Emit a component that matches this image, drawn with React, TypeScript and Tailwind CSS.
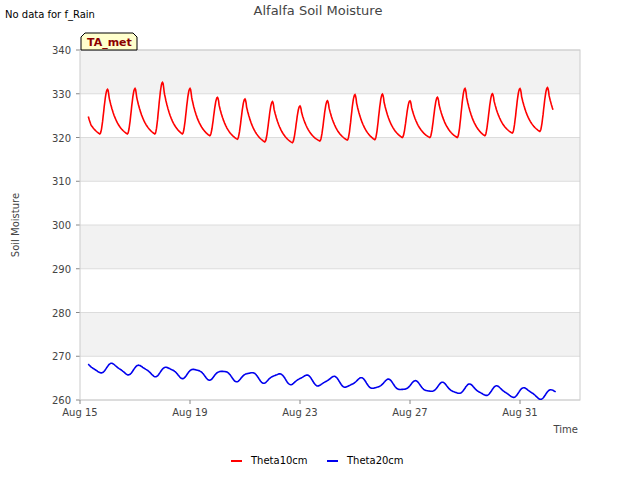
const X0 = 80;
const DAY = 27.5;
const sx = (t: number) => X0 + t * DAY;
const sy = (v: number) => 50 + (340 - v) * 4.375;

const peaks = [331, 331.2, 332.6, 331.2, 329.2, 328.8, 328.2, 327.2, 328.4, 329.8, 329.9, 328.4, 329.2, 331.2, 330, 331.2, 331.4];
const mins = [320.8, 320.8, 320.8, 320.8, 320.4, 319.6, 319, 318.8, 319.2, 319.4, 319.5, 320, 320, 320, 320.4, 321, 321.4, 321.6];

const at = (arr: number[], i: number) => arr[Math.max(0, Math.min(arr.length - 1, i))];

function red(t: number) {
  const s = t - 0.72;
  const k = Math.floor(s);
  const p = s - k;
  const lo = at(mins, k + 1);
  const prevLo = at(mins, k);
  const pk = at(peaks, k);
  if (p < 0.28) {
    return prevLo + (pk - prevLo) * (0.5 - 0.5 * Math.cos((p / 0.28) * Math.PI));
  }
  const q = (p - 0.28) / 0.72;
  const kk = 2.2;
  const e = (Math.exp(-kk * q) - Math.exp(-kk)) / (1 - Math.exp(-kk));
  const soft = q < 0.08 ? 1 - (1 - e) * (q / 0.08) : e;
  return lo + (pk - lo) * soft;
}

function blue(t: number) {
  const base = 268 - t * 0.37;
  const p = t - Math.floor(t);
  const w = Math.cos((p - 0.2) * 2 * Math.PI);
  return base + 1.1 * w - 0.4 + 0.25 * Math.sin(t * 13);
}

function path(f: (t: number) => number, a: number, b: number) {
  const pts: string[] = [];
  for (let t = a; t <= b; t += 0.02) pts.push(`${sx(t).toFixed(1)},${sy(f(t)).toFixed(1)}`);
  return "M" + pts.join("L");
}

const redD = path((t) => (t < 0.4 ? 324.8 - (t - 0.3) * 20 : red(t)), 0.3, 17.2);
const blueD = path(blue, 0.3, 17.3);

const yTicks = [260, 270, 280, 290, 300, 310, 320, 330, 340];
const xTicks = [
  { d: 0, l: "Aug 15" },
  { d: 4, l: "Aug 19" },
  { d: 8, l: "Aug 23" },
  { d: 12, l: "Aug 27" },
  { d: 16, l: "Aug 31" },
];
const font = "'DejaVu Sans', sans-serif";

export default function App() {
  return (
    <div className="relative h-[480px] w-[640px] bg-white" style={{ fontFamily: font }}>
      <svg width="640" height="480" className="block" fontFamily={font}>
        <text x="5" y="18" fontSize="10" fill="#000">No data for f_Rain</text>
        <text x="318" y="15" fontSize="13" fill="#444" textAnchor="middle">Alfalfa Soil Moisture</text>
        {[330, 310, 290, 270].map((v) => (
          <rect key={v} x="80" y={sy(v + 10)} width="500" height={43.75} fill="#f2f2f2" />
        ))}
        {yTicks.map((v) => (
          <g key={v}>
            <line x1="80" x2="580" y1={sy(v)} y2={sy(v)} stroke="#dcdcdc" strokeWidth="1" />
            <line x1="76" x2="80" y1={sy(v)} y2={sy(v)} stroke="#888" />
            <text x="71" y={sy(v) + 4} fontSize="10" fill="#444" textAnchor="end">{v}</text>
          </g>
        ))}
        <rect x="80" y="50" width="500" height="350" fill="none" stroke="#ccc" />
        {xTicks.map((x) => (
          <g key={x.l}>
            <line x1={sx(x.d)} x2={sx(x.d)} y1="400" y2="404" stroke="#888" />
            <text x={sx(x.d)} y="416" fontSize="10" fill="#444" textAnchor="middle">{x.l}</text>
          </g>
        ))}
        <text x="578" y="433" fontSize="10" fill="#444" textAnchor="end">Time</text>
        <text x="19" y="225" fontSize="10" fill="#444" textAnchor="middle" transform="rotate(-90 19 225)">Soil Moisture</text>
        <path d={redD} fill="none" stroke="#ff0000" strokeWidth="1.6" />
        <path d={blueD} fill="none" stroke="#0000ee" strokeWidth="1.6" />
        <path d="M81,50 L81,37 L85,33 L133,33 L137,37 L137,50 Z" fill="#ffffcc" stroke="#000" strokeWidth="1" />
        <text x="87" y="46" fontSize="11" fontWeight="bold" fill="#8b0000">TA_met</text>
        <line x1="231" x2="242" y1="461" y2="461" stroke="#ff0000" strokeWidth="2" />
        <text x="251" y="464" fontSize="10" fill="#000">Theta10cm</text>
        <line x1="327" x2="338" y1="461" y2="461" stroke="#0000ee" strokeWidth="2" />
        <text x="347" y="464" fontSize="10" fill="#000">Theta20cm</text>
      </svg>
    </div>
  );
}
